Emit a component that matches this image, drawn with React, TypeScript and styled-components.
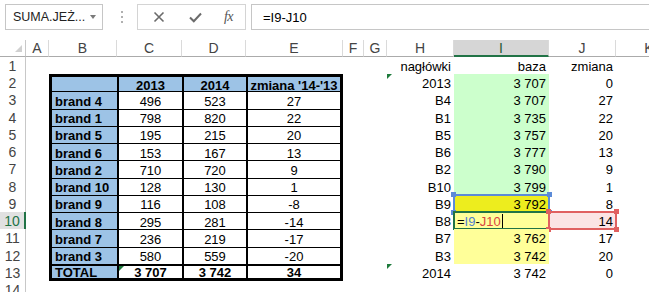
import React from 'react';
import styled, { createGlobalStyle } from 'styled-components';

const Global = createGlobalStyle`
  html, body { margin: 0; padding: 0; background: #fff; }
  body { font-family: "Liberation Sans", Arial, sans-serif; }
`;

const Page = styled.div`
  width: 649px;
  height: 292px;
  overflow: hidden;
  background: #fff;
`;

/* ---------- formula bar ---------- */
const FormulaBar = styled.div`
  display: flex;
  align-items: center;
  height: 26px;
  margin-top: 4px;
  padding-left: 5px;
`;

const NameBox = styled.div`
  box-sizing: border-box;
  width: 98px;
  height: 26px;
  border: 1px solid #c6c6c6;
  display: flex;
  align-items: center;
  justify-content: space-between;
  padding: 0 4px 0 7px;
  font-size: 12.5px;
  color: #222;
`;

const DropArrow = styled.span`
  width: 0;
  height: 0;
  border-left: 3.5px solid transparent;
  border-right: 3.5px solid transparent;
  border-top: 4px solid #7a7a7a;
  margin-right: 2px;
`;

const Dots = styled.div`
  display: flex;
  flex-direction: column;
  gap: 3px;
  margin: 0 14px 0 18px;
  span {
    width: 2px;
    height: 2px;
    background: #b0b0b0;
  }
`;

const FuncBox = styled.div`
  box-sizing: border-box;
  width: 109px;
  height: 26px;
  border: 1px solid #d4d4d4;
  display: grid;
  grid-template-columns: 38px 34px 1fr;
  align-items: center;
  justify-items: center;
  padding-left: 2px;
`;

const Fx = styled.span`
  font-family: "Liberation Serif", "Times New Roman", serif;
  font-style: italic;
  font-size: 14px;
  color: #555;
  letter-spacing: -0.5px;
`;

const FormulaInput = styled.div`
  box-sizing: border-box;
  flex: 1;
  height: 26px;
  margin-left: 5px;
  border: 1px solid #c6c6c6;
  border-right: none;
  display: flex;
  align-items: center;
  padding-left: 11px;
  font-size: 13px;
  color: #000;
`;

/* ---------- sheet ---------- */
const Sheet = styled.div`
  display: grid;
  grid-template-columns: 26px 23px 68px 65px 64px 97px 21px 23px 67px 95px 67px 67px;
  grid-template-rows: 17px 17px repeat(12, 17.25px) 17px;
  margin-top: 10px;
`;

const Corner = styled.div`
  box-sizing: border-box;
  border-right: 1px solid #c8c8c8;
  border-bottom: 1px solid #ababab;
  display: flex;
  align-items: flex-end;
  justify-content: flex-end;
  padding: 0 3px 4px 0;
`;

const CornerTri = styled.span`
  width: 0;
  height: 0;
  border-left: 7px solid transparent;
  border-bottom: 7px solid #d0d0d0;
`;

const ColHead = styled.div<{ $sel?: boolean }>`
  box-sizing: border-box;
  display: flex;
  align-items: center;
  justify-content: center;
  font-size: 14px;
  color: ${p => (p.$sel ? '#1f5b36' : '#444')};
  background: ${p => (p.$sel ? '#d6d6d6' : '#fff')};
  border-right: 1px solid #dadada;
  border-bottom: ${p => (p.$sel ? '2px solid #217346' : '1px solid #ababab')};
`;

const RowHead = styled.div<{ $sel?: boolean }>`
  box-sizing: border-box;
  display: flex;
  align-items: center;
  justify-content: center;
  padding-top: 1px;
  font-size: 14px;
  color: ${p => (p.$sel ? '#217346' : '#444')};
  background: ${p => (p.$sel ? '#e1e1e1' : '#fff')};
  border-right: ${p => (p.$sel ? '2px solid #217346' : '1px solid #c8c8c8')};
`;

type Align = 'left' | 'center' | 'right';

const Cell = styled.div<{
  $align: Align;
  $bold?: boolean;
  $fill?: string;
  $b: [number, number, number, number];
}>`
  position: relative;
  box-sizing: border-box;
  display: flex;
  align-items: center;
  justify-content: ${p => (p.$align === 'left' ? 'flex-start' : p.$align === 'center' ? 'center' : 'flex-end')};
  padding: 2px 3px 0 3px;
  font-size: 13px;
  line-height: 15px;
  font-weight: ${p => (p.$bold ? 700 : 400)};
  color: #000;
  background: ${p => p.$fill ?? 'transparent'};
  white-space: nowrap;
  border-style: solid;
  border-color: #000;
  border-width: ${p => p.$b.map(v => `${v}px`).join(' ')};
`;

const Flag = styled.span`
  position: absolute;
  top: 0;
  left: 0;
  width: 0;
  height: 0;
  border-top: 5px solid #1e7b3c;
  border-right: 5px solid transparent;
`;

const RefBox = styled.span<{ $color: string; $w: number }>`
  position: absolute;
  top: -1px;
  left: -1px;
  right: -1px;
  bottom: -1px;
  border: ${p => `${p.$w}px solid ${p.$color}`};
  pointer-events: none;
`;

const Handle = styled.span<{ $color: string; $pos: string }>`
  position: absolute;
  width: 5px;
  height: 5px;
  background: ${p => p.$color};
  ${p => p.$pos}
`;

const EditText = styled.span`
  display: flex;
  align-items: center;
`;

const RefI = styled.span`color: #4f7fd0;`;
const RefJ = styled.span`color: #d9453f;`;
const Caret = styled.span`
  display: inline-block;
  width: 1px;
  height: 15px;
  background: #000;
  margin-left: 1px;
`;

const handlePos = [
  'top:-3px;left:-3px;',
  'top:-3px;right:-3px;',
  'bottom:-3px;left:-3px;',
  'bottom:-3px;right:-3px;',
];

const RefFrame: React.FC<{ color: string }> = ({ color }) => (
  <>
    <RefBox $color={color} $w={2} />
    {handlePos.map(p => (
      <Handle key={p} $color={color} $pos={p} />
    ))}
  </>
);

const cols = ['A', 'B', 'C', 'D', 'E', 'F', 'G', 'H', 'I', 'J', 'K'];

const brands: [string, string, string, string][] = [
  ['brand 4', '496', '523', '27'],
  ['brand 1', '798', '820', '22'],
  ['brand 5', '195', '215', '20'],
  ['brand 6', '153', '167', '13'],
  ['brand 2', '710', '720', '9'],
  ['brand 10', '128', '130', '1'],
  ['brand 9', '116', '108', '-8'],
  ['brand 8', '295', '281', '-14'],
  ['brand 7', '236', '219', '-17'],
  ['brand 3', '580', '559', '-20'],
];

const right: [string, string, string][] = [
  ['nagłówki', 'baza', 'zmiana'],
  ['2013', '3 707', '0'],
  ['B4', '3 707', '27'],
  ['B1', '3 735', '22'],
  ['B5', '3 757', '20'],
  ['B6', '3 777', '13'],
  ['B2', '3 790', '9'],
  ['B10', '3 799', '1'],
  ['B9', '3 792', '8'],
  ['B8', '', '14'],
  ['B7', '3 762', '17'],
  ['B3', '3 742', '20'],
  ['2014', '3 742', '0'],
];

const BLUE = '#9dc3e6';
const GREEN = '#ccffcc';
const YELLOW = '#eded1e';
const LYELLOW = '#ffff99';
const PINK = '#fbe4e4';

type CellDef = {
  text?: React.ReactNode;
  align?: Align;
  bold?: boolean;
  fill?: string;
  flag?: boolean;
  extra?: React.ReactNode;
};

function tableCell(row: number, col: number): CellDef {
  // row: 2..13, col: 1..4 (B..E)
  if (row === 2) {
    return { text: ['', '2013', '2014', "zmiana '14-'13"][col - 1], bold: true, align: 'center', fill: BLUE };
  }
  if (row === 13) {
    const t = ['TOTAL', '3 707', '3 742', '34'][col - 1];
    return { text: t, bold: true, align: col === 1 ? 'left' : 'center', fill: col === 1 ? BLUE : undefined, flag: col === 2 };
  }
  const b = brands[row - 3];
  if (col === 1) return { text: b[0], bold: true, align: 'left', fill: BLUE };
  return { text: b[col - 1], align: 'center' };
}

function tableBorders(row: number, col: number): [number, number, number, number] {
  const top = row === 2 ? 3 : row === 13 ? 2 : 1;
  const left = col === 1 ? 3 : 2;
  const rgt = col === 4 ? 3 : 0;
  const bottom = row === 13 ? 3 : 0;
  return [top, rgt, bottom, left];
}

function rightCell(row: number, col: number): CellDef {
  const r = right[row - 1];
  if (col === 7) return { text: r[0], align: 'right', flag: row === 2 || row === 13 };
  if (col === 8) {
    let fill: string | undefined;
    if (row >= 2 && row <= 8) fill = GREEN;
    else if (row === 9) fill = YELLOW;
    else if (row >= 10 && row <= 12) fill = LYELLOW;
    if (row === 9) return { text: r[1], align: 'right', fill, extra: <RefFrame color="#5b8bd8" /> };
    if (row === 10)
      return {
        align: 'left',
        fill,
        text: (
          <EditText>
            =<RefI>I9</RefI>-<RefJ>J10</RefJ>
            <Caret />
          </EditText>
        ),
        extra: <RefBox $color="#217346" $w={2} />,
      };
    return { text: r[1], align: 'right', fill };
  }
  if (col === 9) {
    if (row === 10) return { text: r[2], align: 'right', fill: PINK, extra: <RefFrame color="#e06060" /> };
    return { text: r[2], align: 'right' };
  }
  return {};
}

const XIcon = () => (
  <svg width="12" height="12" viewBox="0 0 12 12">
    <path d="M1.5 1.5 L10.5 10.5 M10.5 1.5 L1.5 10.5" stroke="#6b6b6b" strokeWidth="1.6" fill="none" />
  </svg>
);

const CheckIcon = () => (
  <svg width="13" height="11" viewBox="0 0 13 11">
    <path d="M1 5.5 L4.8 9.3 L12 1.5" stroke="#6b6b6b" strokeWidth="2" fill="none" />
  </svg>
);

export default function App() {
  const rows: React.ReactNode[] = [];
  for (let r = 1; r <= 14; r++) {
    rows.push(
      <RowHead key={`rh${r}`} $sel={r === 10}>
        {r}
      </RowHead>,
    );
    for (let c = 0; c < 11; c++) {
      let def: CellDef = {};
      let b: [number, number, number, number] = [0, 0, 0, 0];
      if (r >= 2 && r <= 13 && c >= 1 && c <= 4) {
        def = tableCell(r, c);
        b = tableBorders(r, c);
      } else if (r <= 13 && c >= 7 && c <= 9) {
        def = rightCell(r, c);
      }
      rows.push(
        <Cell key={`c${r}-${c}`} $align={def.align ?? 'right'} $bold={def.bold} $fill={def.fill} $b={b}>
          {def.flag && <Flag />}
          {def.text}
          {def.extra}
        </Cell>,
      );
    }
  }

  return (
    <Page>
      <Global />
      <FormulaBar>
        <NameBox>
          SUMA.JEŻ...
          <DropArrow />
        </NameBox>
        <Dots>
          <span />
          <span />
          <span />
        </Dots>
        <FuncBox>
          <XIcon />
          <CheckIcon />
          <Fx>fx</Fx>
        </FuncBox>
        <FormulaInput>=I9-J10</FormulaInput>
      </FormulaBar>
      <Sheet>
        <Corner>
          <CornerTri />
        </Corner>
        {cols.map(c => (
          <ColHead key={c} $sel={c === 'I'}>
            {c}
          </ColHead>
        ))}
        {rows}
      </Sheet>
    </Page>
  );
}
